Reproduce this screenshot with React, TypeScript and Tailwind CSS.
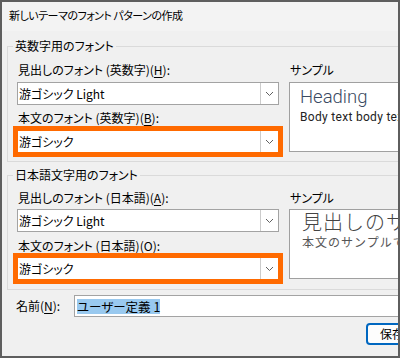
import React from "react";

const Chevron = () => (
  <svg width="9" height="6" viewBox="0 0 9 6" aria-hidden="true">
    <path d="M1 1l3.5 3.5L8 1" fill="none" stroke="#606060" strokeWidth="1" />
  </svg>
);

const FontSelect = ({ value, marked }: { value: string; marked?: boolean }) => (
  <div
    className={
      "flex h-[23px] w-[262px] items-center border border-[#a3a3a3] bg-white " +
      (marked ? "outline-[5px] outline-offset-[-1px] outline-[#ff6a00] outline-solid" : "")
    }
  >
    <span className="flex-1 truncate pl-px text-[12px] leading-[16px]">{value}</span>
    <div className="flex h-full w-[18px] items-center justify-center border-l border-[#cccccc] bg-white">
      <Chevron />
    </div>
  </div>
);

const Mn = ({ c }: { c: string }) => <span className="underline underline-offset-2">{c}</span>;

type GroupProps = {
  title: string;
  headLabel: React.ReactNode;
  bodyLabel: React.ReactNode;
  headFont: string;
  bodyFont: string;
  sample: React.ReactNode;
  first?: boolean;
};

const Group = ({ title, headLabel, bodyLabel, headFont, bodyFont, sample, first }: GroupProps) => (
  <fieldset
    className={
      "w-[430px] border border-[#dadada] " +
      (first ? "mt-[7px] pt-[8px] pb-[8px]" : "mt-[5px] pt-[7px] pb-[9px]")
    }
  >
    <legend className="ml-[5px] px-[2px] text-[12px] leading-[16px]">{title}</legend>
    <div className="flex gap-[10px] pl-[9px]">
      <div className="flex w-[262px] shrink-0 flex-col">
        <div className="pl-px text-[12px] leading-[16px]">{headLabel}</div>
        <div className={first ? "mt-[4px]" : "mt-[3px]"}>
          <FontSelect value={headFont} />
        </div>
        <div className={"pl-px text-[12px] leading-[16px] " + (first ? "mt-[5px]" : "mt-[6px]")}>
          {bodyLabel}
        </div>
        <div className={first ? "mt-[4px]" : "mt-[3px]"}>
          <FontSelect value={bodyFont} marked />
        </div>
      </div>
      <div className="flex flex-1 flex-col">
        <div className="pl-px text-[12px] leading-[16px]">サンプル</div>
        <div
          className={
            "h-[70px] overflow-hidden whitespace-nowrap border border-[#a0a0a0] bg-white " +
            (first ? "mt-[4px]" : "mt-[3px]")
          }
        >
          {sample}
        </div>
      </div>
    </div>
  </fieldset>
);

export default function App() {
  return (
    <div className="h-[358px] w-[400px] overflow-hidden border-2 border-[#5e5e5e] bg-[#f0f0f0] font-['Noto_Sans_CJK_JP',sans-serif] text-black [font-feature-settings:'palt']">
      <div className="flex h-[29px] items-center bg-[#f3f3f3] pb-[2px] pl-[7px] text-[11px] tracking-[-0.5px]">
        新しいテーマのフォント パターンの作成
      </div>
      <div className="px-[5px]">
        <Group
          first
          title="英数字用のフォント"
          headLabel={
            <>
              見出しのフォント (英数字)(<Mn c="H" />):
            </>
          }
          bodyLabel={
            <>
              本文のフォント (英数字)(<Mn c="B" />):
            </>
          }
          headFont="游ゴシック Light"
          bodyFont="游ゴシック"
          sample={
            <div className="pl-[10px] pt-[2px]">
              <div className="font-['Roboto',sans-serif] text-[18.5px] font-light leading-[24px] text-[#3a4a62] [font-feature-settings:normal]">
                Heading
              </div>
              <div className="font-['Roboto',sans-serif] text-[12px] leading-[16px] tracking-[0.3px] text-[#222]">
                Body text body text body text
              </div>
            </div>
          }
        />
        <Group
          title="日本語文字用のフォント"
          headLabel={
            <>
              見出しのフォント (日本語)(<Mn c="A" />):
            </>
          }
          bodyLabel={
            <>
              本文のフォント (日本語)(<Mn c="O" />):
            </>
          }
          headFont="游ゴシック Light"
          bodyFont="游ゴシック"
          sample={
            <div className="pl-[12px]">
              <div className="text-[20px] font-light leading-[24px] tracking-[1px] text-[#444] [font-feature-settings:normal]">
                見出しのサンプルです
              </div>
              <div className="text-[12px] leading-[16px] tracking-[1px] text-[#555] [font-feature-settings:normal]">
                本文のサンプルです。
              </div>
            </div>
          }
        />
        <div className="mt-[5px] flex w-[430px] items-center">
          <div className="w-[67px] shrink-0 pl-[9px] text-[12px] leading-[16px]">
            名前(<Mn c="N" />):
          </div>
          <div className="flex h-[22px] flex-1 items-center border border-[#a3a3a3] bg-white pl-[2px]">
            <span className="bg-[#99c9ef] text-[12.5px] leading-[15px]">ユーザー定義 1</span>
          </div>
        </div>
        <div className="mt-[6px] flex gap-[8px] pl-[359px]">
          <button
            type="button"
            className="h-[22px] w-[75px] shrink-0 rounded-[4px] border-2 border-[#0067c0] bg-[#fdfdfd] pl-[12px] text-left text-[12px] leading-[16px]"
          >
            保存
          </button>
          <button
            type="button"
            className="h-[22px] w-[75px] shrink-0 rounded-[4px] border border-[#d0d0d0] bg-[#fdfdfd] text-[12px]"
          >
            キャンセル
          </button>
        </div>
      </div>
    </div>
  );
}
